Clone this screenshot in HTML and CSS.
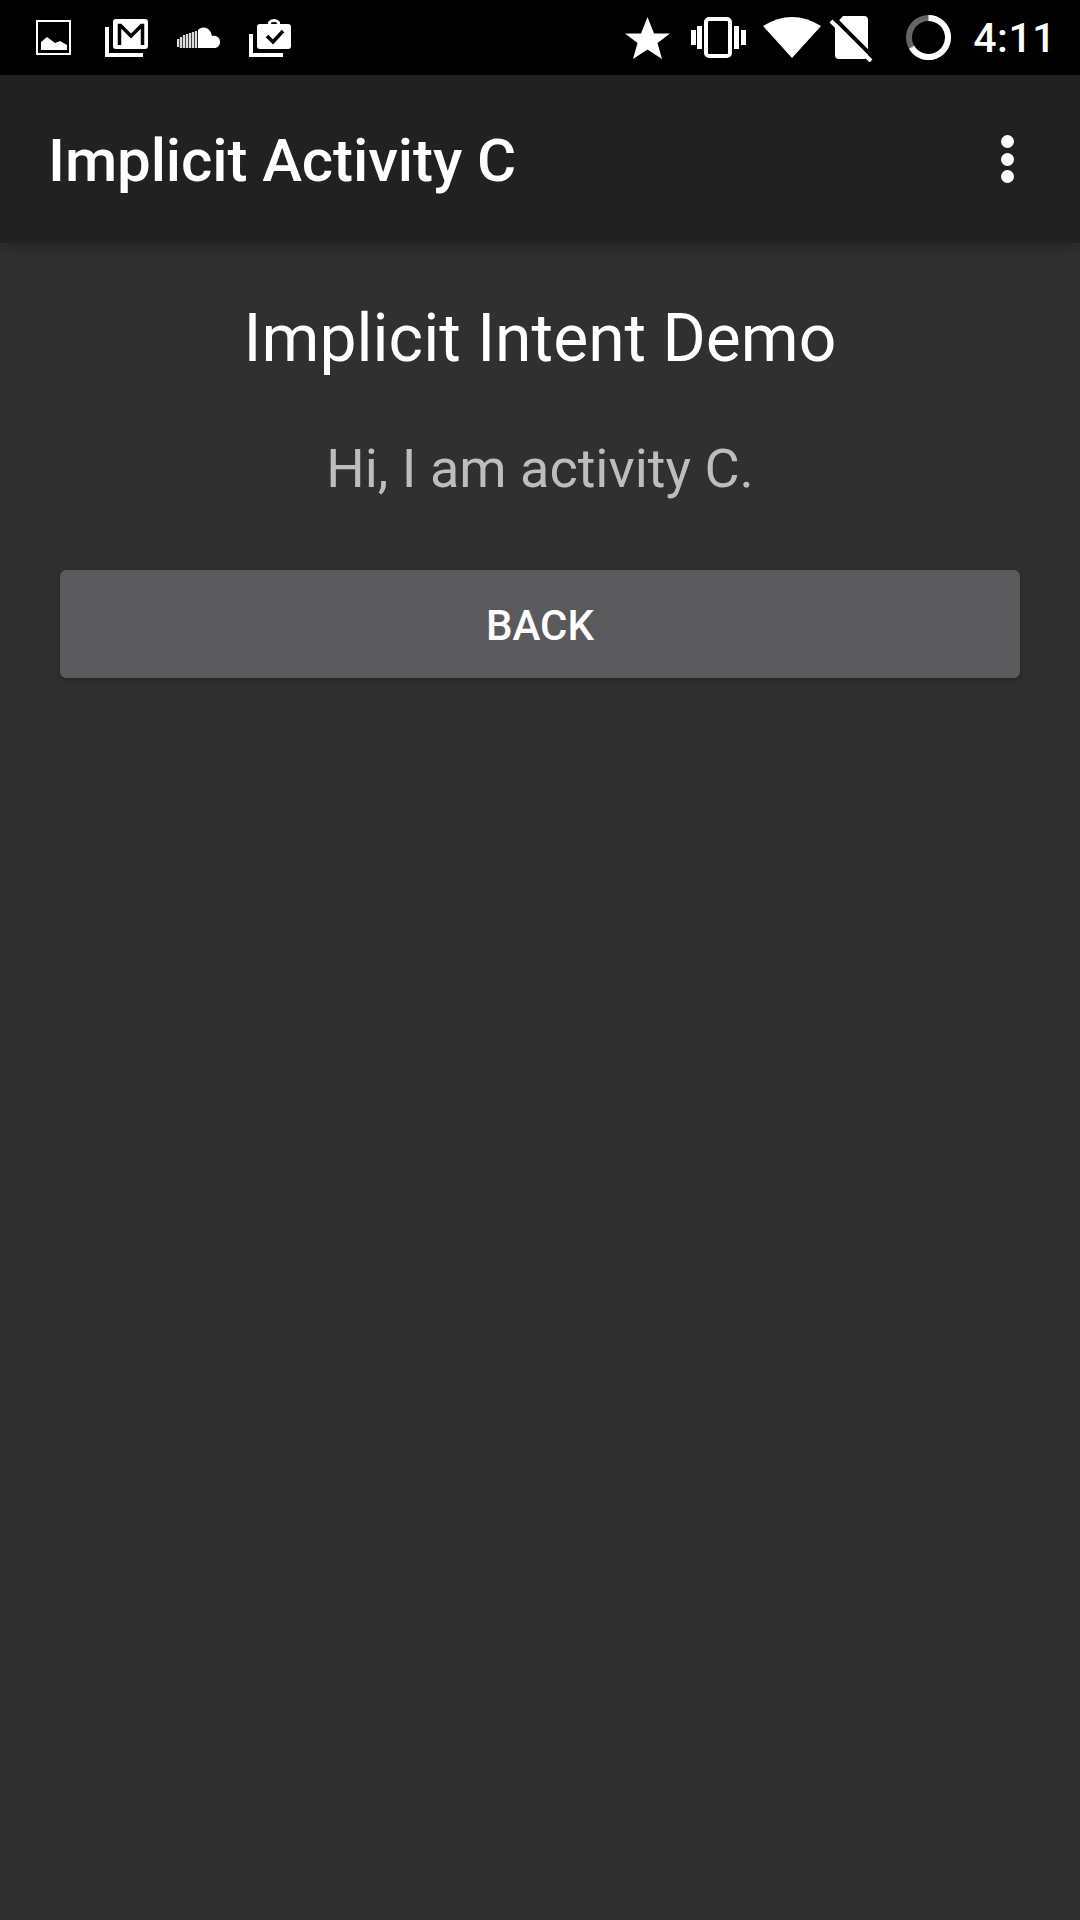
FILE: index.html
```html
<!DOCTYPE html>
<html lang="en">
<head>
    <meta charset="UTF-8">
    <meta name="viewport" content="width=device-width, initial-scale=1.0">
    <title>Implicit Activity C</title>
    <link rel="stylesheet" href="styles.css">
</head>
<body>
    <div class="status-bar">
        <div class="status-left">
            <svg class="icon-picture" width="35" height="35" viewBox="0 0 35 35">
                <rect x="1" y="1" width="33" height="33" fill="none" stroke="#fff" stroke-width="2"/>
                <path d="M5 30V22L11 17L19 23L24 21L31 25V30Z" fill="#fff"/>
            </svg>
            <svg class="icon-gmail" width="43" height="38" viewBox="0 0 43 38">
                <path d="M2 8V36H38" fill="none" stroke="#fff" stroke-width="4"/>
                <rect x="8" y="0" width="35" height="30" rx="3" fill="#fff"/>
                <path d="M14.500 26V6.500H15.500L26 17L36.500 6.500H37.500V26" fill="none" stroke="#000" stroke-width="3.500"/>
            </svg>
            <svg class="icon-cloud" width="43" height="21" viewBox="0 0 43 21">
                <path d="M1 12V20M4 10V21M7 8V21M10 7V21M13 6V21M16 5V21M19 4V21" stroke="#dcdcdc" stroke-width="2.300"/>
                <path d="M21 21V3C24 -1 33 -1 35 9C39 8 43 10 43 15C43 19 40 21 37 21Z" fill="#fff"/>
            </svg>
            <svg class="icon-work" width="42" height="39" viewBox="0 0 42 39">
                <path d="M2 16V37H34" fill="none" stroke="#fff" stroke-width="4"/>
                <path d="M20.500 7V4.500A5 3.500 0 0 1 29.500 4.500V7" fill="none" stroke="#fff" stroke-width="3"/>
                <rect x="8" y="6" width="34" height="25" rx="3" fill="#fff"/>
                <path d="M18 18L24 24L34 13" fill="none" stroke="#000" stroke-width="3.500"/>
            </svg>
        </div>
        <div class="status-right">
            <svg class="icon-star" width="45" height="42" viewBox="0 0 45 42">
                <path d="M22.500 0L29 16.500H45L32.500 26L37 42L22.500 32.500L8 42L12.500 26L0 16.500H16Z" fill="#fff"/>
            </svg>
            <svg class="icon-vibrate" width="55" height="41" viewBox="0 0 55 41">
                <rect x="15" y="2" width="24" height="37" rx="3" fill="none" stroke="#fff" stroke-width="4"/>
                <path d="M0 13H5V28H0ZM6 9H11V32H6ZM43 9H48V32H43ZM50 13H55V28H50Z" fill="#fff"/>
            </svg>
            <svg class="icon-wifi" width="58" height="41" viewBox="0 0 58 41">
                <path d="M0 9Q29 -9 58 9L29 41Z" fill="#fff"/>
            </svg>
            <svg class="icon-sim" width="44" height="46" viewBox="0 0 44 46">
                <path d="M14 0H35A4 4 0 0 1 39 4V39A4 4 0 0 1 35 43H10A4 4 0 0 1 6 39V9Z" fill="#fff"/>
                <path d="M5 2L45 42" stroke="#000" stroke-width="4"/>
                <path d="M2 5L42 45" stroke="#fff" stroke-width="4"/>
            </svg>
            <svg class="icon-battery" width="45" height="45" viewBox="0 0 45 45">
                <circle cx="22.500" cy="22.500" r="19.500" fill="none" stroke="#666" stroke-width="6"/>
                <path d="M22.500 3A19.500 19.500 0 1 1 5.600 32.200" fill="none" stroke="#fff" stroke-width="6"/>
            </svg>
            <span class="clock">4:11</span>
        </div>
    </div>
    <div class="app-bar">
        <span class="app-title">Implicit Activity C</span>
        <div class="overflow-menu">
            <span class="dot"></span>
            <span class="dot"></span>
            <span class="dot"></span>
        </div>
    </div>
    <div class="content">
        <h1>Implicit Intent Demo</h1>
        <p>Hi, I am activity C.</p>
        <button type="button">BACK</button>
    </div>
</body>
</html>
```

FILE: styles.css
```css
body {
    font-family: Roboto, sans-serif;
    background-color: #303030;
    margin: 0;
    width: 1080px;
    height: 1920px;
    overflow: hidden;
    color: #fff;
}

.status-bar {
    height: 75px;
    box-sizing: border-box;
    background-color: #000;
    display: flex;
    justify-content: space-between;
    align-items: center;
    padding: 0 24px 0 36px;
}

.status-left,
.status-right {
    display: flex;
    align-items: center;
}

.status-left {
    gap: 29px;
}

.icon-gmail {
    margin-left: 5px;
}

.icon-vibrate {
    margin-left: 21px;
}

.icon-wifi {
    margin-left: 17px;
}

.icon-sim {
    margin-left: 8px;
    margin-top: 3px;
}

.icon-battery {
    margin-left: 33px;
}

.clock {
    font-size: 41px;
    font-weight: 500;
    margin-left: 22px;
    letter-spacing: 0.5px;
}

.app-bar {
    height: 168px;
    background-color: #212121;
    display: flex;
    justify-content: space-between;
    align-items: center;
    padding: 0 66px 0 48px;
    box-sizing: border-box;
    box-shadow: 0 4px 14px rgba(0, 0, 0, 0.25);
    position: relative;
}

.app-title {
    font-size: 60px;
    font-weight: 500;
    letter-spacing: -0.1px;
    margin-top: 2px;
}

.overflow-menu {
    display: flex;
    flex-direction: column;
    gap: 4.5px;
}

.dot {
    width: 13px;
    height: 13px;
    border-radius: 50%;
    background-color: #fff;
}

.content {
    display: flex;
    flex-direction: column;
    align-items: center;
    padding: 56px 60px 0;
}

.content h1 {
    font-size: 66px;
    font-weight: 400;
    margin: 0;
    line-height: 80px;
}

.content p {
    font-size: 54px;
    font-weight: 400;
    color: #bdbdbd;
    margin: 58px 0 0;
    line-height: 64px;
}

.content button {
    width: 100%;
    height: 108px;
    margin-top: 69px;
    padding-top: 4px;
    border: none;
    border-radius: 6px;
    background-color: #5a5a5c;
    color: #fff;
    font-family: Roboto, sans-serif;
    font-size: 42px;
    font-weight: 500;
    box-shadow: 0 2px 5px rgba(0, 0, 0, 0.3);
}
```
